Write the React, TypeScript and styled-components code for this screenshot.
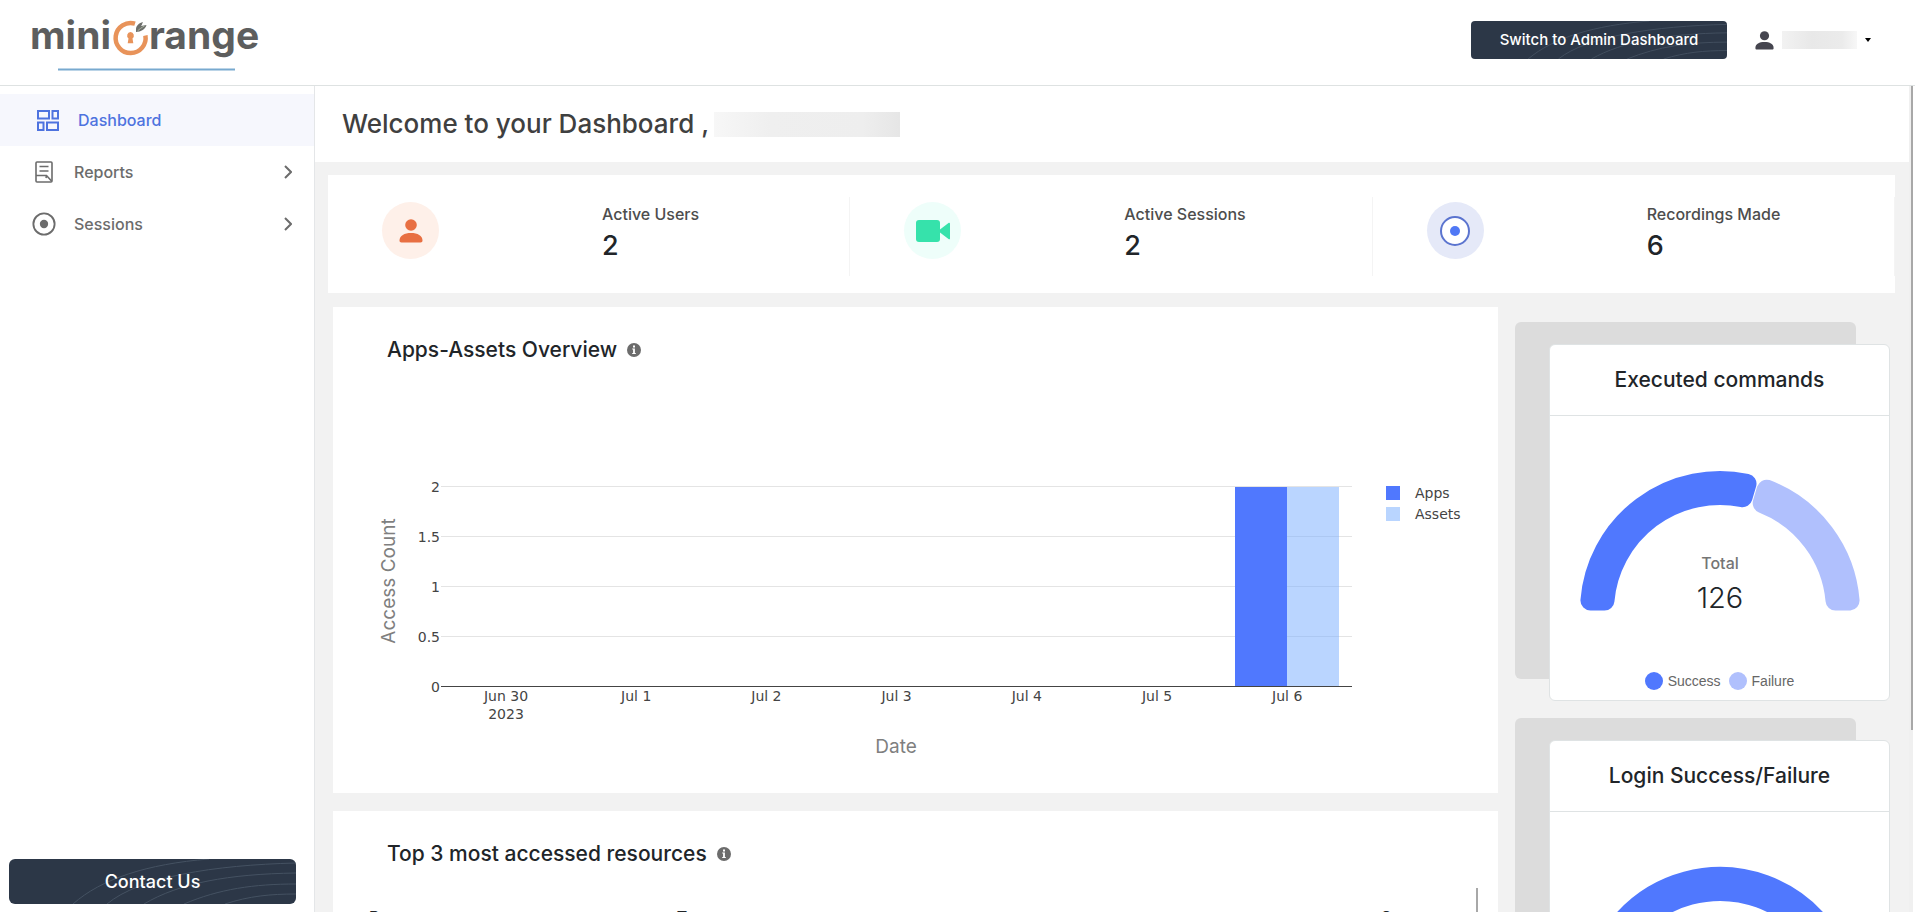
import React from "react";
import styled, { createGlobalStyle } from "styled-components";

const GlobalStyle = createGlobalStyle`
  *, *::before, *::after { box-sizing: border-box; }
  body {
    margin: 0;
    background: #ffffff;
    color: #212529;
    font-family: Inter, "Open Sans", sans-serif;
    overflow: hidden;
  }
  h1, h2, p, ul { margin: 0; padding: 0; }
  ul { list-style: none; }
  button { font-family: inherit; cursor: pointer; }
  svg { display: block; }
`;

/* ---------- shell ---------- */

const Page = styled.div`
  display: flex;
  flex-direction: column;
  height: 100vh;
`;

const Header = styled.header`
  display: flex;
  align-items: flex-start;
  justify-content: space-between;
  flex: none;
  height: 86px;
  padding: 0 44px 0 24px;
  border-bottom: 1px solid #dee2e2;
`;

const HomeLink = styled.a`
  display: block;
  padding-top: 8px;
`;

const HeaderActions = styled.div`
  display: flex;
  align-items: center;
  gap: 28px;
  padding-top: 21px;
`;

const Shell = styled.div`
  display: grid;
  grid-template-columns: 315px minmax(0, 1fr) 6px;
  flex: 1;
  min-height: 0;
`;

const ScrollTrack = styled.div`
  padding-left: 2px;
  background: linear-gradient(to right, #f0f0f0 4px, #ffffff 4px);
`;

const ScrollThumb = styled.div`
  width: 2px;
  height: 78%;
  background: #a8a8a8;
`;

/* ---------- buttons ---------- */

const DarkButton = styled.button<{ $large?: boolean }>`
  position: relative;
  overflow: hidden;
  width: ${(p) => (p.$large ? "100%" : "256px")};
  height: ${(p) => (p.$large ? "45px" : "38px")};
  padding: 0 0 1px;
  border: 0;
  border-radius: ${(p) => (p.$large ? "6px" : "4px")};
  background: #2c3747;
  color: #ffffff;
  font-size: ${(p) => (p.$large ? "18px" : "15px")};
  font-weight: 500;
`;

const Waves = styled.svg`
  position: absolute;
  inset: 0;
  width: 100%;
  height: 100%;
`;

const ButtonLabel = styled.span`
  position: relative;
`;

const ProfileButton = styled.button`
  display: flex;
  align-items: center;
  gap: 8px;
  padding: 0;
  border: 0;
  background: none;
`;

const Redacted = styled.span<{ $wide?: boolean }>`
  display: block;
  width: ${(p) => (p.$wide ? "186px" : "75px")};
  height: ${(p) => (p.$wide ? "25px" : "18px")};
  background: ${(p) =>
    p.$wide
      ? "linear-gradient(to right, #f7f7f7, #efefef 30%, #eeeeee 80%, #e6e6e6)"
      : "linear-gradient(to right, #f2f2f2, #e8e8e8 40%, #ebebeb 80%, #f7f7f7)"};
`;

/* ---------- sidebar ---------- */

const Sidebar = styled.aside`
  display: flex;
  flex-direction: column;
  justify-content: space-between;
  padding: 8px 0;
  border-right: 1px solid #e4e6e8;
`;

const NavList = styled.ul`
  display: flex;
  flex-direction: column;
`;

const NavLink = styled.a<{ $active?: boolean }>`
  display: grid;
  grid-template-columns: 24px 1fr 8px;
  align-items: center;
  gap: 18px;
  height: 52px;
  padding: 0 22px 0 ${(p) => (p.$active ? "36px" : "32px")};
  background: ${(p) => (p.$active ? "#f6f7fd" : "transparent")};
  color: ${(p) => (p.$active ? "#4e73df" : "#6c6c6c")};
  font-size: 16px;
  font-weight: 500;
  text-decoration: none;
`;

const IconSlot = styled.span`
  display: flex;
  justify-content: center;
`;

const SidebarFooter = styled.div`
  padding: 0 18px 0 9px;
`;

/* ---------- content ---------- */

const Content = styled.main`
  overflow: hidden;
  background: #f2f2f2;
`;

const Welcome = styled.div`
  display: flex;
  align-items: center;
  gap: 5px;
  height: 76px;
  padding: 0 27px;
  background: #ffffff;
`;

const WelcomeTitle = styled.h1`
  color: #3f4040;
  font-size: 26px;
  font-weight: 500;
  line-height: 40px;
`;

const Stats = styled.section`
  display: grid;
  grid-template-columns: repeat(3, 1fr);
  margin: 13px 14px 0 13px;
  padding: 22px 0 17px;
  background: #ffffff;
`;

const Stat = styled.div`
  display: grid;
  grid-template-columns: 57px 1fr;
  column-gap: 163px;
  height: 79px;
  padding: 5px 0 0 54px;
  border-right: 1px solid #f4f4f4;
`;

const StatBadge = styled.div<{ $tint: string }>`
  display: flex;
  align-items: center;
  justify-content: center;
  width: 57px;
  height: 57px;
  border-radius: 50%;
  background: ${(p) => p.$tint};
`;

const StatLabel = styled.p`
  color: #4d4d4d;
  font-size: 16px;
  font-weight: 500;
  line-height: 24px;
`;

const StatValue = styled.p`
  padding-top: 2px;
  font-size: 27px;
  font-weight: 500;
  line-height: 36px;
`;

const Columns = styled.div`
  display: grid;
  grid-template-columns: minmax(0, 1fr) 375px;
  column-gap: 17px;
  align-items: start;
  padding: 14px 19px 0 18px;
`;

const MainColumn = styled.div`
  display: flex;
  flex-direction: column;
  gap: 18px;
`;

const SideColumn = styled.div`
  display: flex;
  flex-direction: column;
  gap: 17px;
  padding-top: 15px;
`;

const Panel = styled.section`
  background: #ffffff;
`;

const PanelHead = styled.div`
  display: flex;
  align-items: center;
  gap: 10px;
  padding: 28px 54px 19px;
`;

const PanelTitle = styled.h2`
  font-size: 21px;
  font-weight: 500;
  line-height: 30px;
`;

const TableScroller = styled.div`
  display: flex;
  justify-content: space-between;
  padding: 0 20px 24px 36px;
`;

const TableThumb = styled.div`
  width: 2px;
  background: #a8a8a8;
`;

const Table = styled.table`
  width: calc(100% - 10px);
  margin-top: 11px;
  border-collapse: collapse;
  table-layout: fixed;
  font-size: 16px;

  th {
    height: 36px;
    padding: 0;
    text-align: left;
    font-weight: 500;
    color: #212529;
  }
`;

/* ---------- stacked gauge cards ---------- */

const Stack = styled.section`
  display: grid;
`;

const StackBack = styled.div`
  grid-area: 1 / 1;
  margin: 0 34px 22px 0;
  border-radius: 6px;
  background: #dcdcdc;
`;

const Card = styled.div`
  grid-area: 1 / 1;
  margin: 22px 0 0 34px;
  border: 1px solid #dfe3e4;
  border-radius: 6px;
  background: #ffffff;
`;

const CardTitle = styled.h2`
  border-bottom: 1px solid #dfe3e4;
  font-size: 21px;
  font-weight: 500;
  line-height: 70px;
  text-align: center;
`;

const Legend = styled.ul`
  display: flex;
  justify-content: center;
  gap: 8px;
  padding: 0 0 10px;
`;

const LegendItem = styled.li<{ $color: string }>`
  display: flex;
  align-items: center;
  gap: 5px;
  color: #666666;
  font-family: "Liberation Sans", Arial, sans-serif;
  font-size: 14px;
  line-height: 18px;

  &::before {
    content: "";
    width: 18px;
    height: 18px;
    border-radius: 50%;
    background: ${(p) => p.$color};
  }
`;

/* ---------- drawings ---------- */

const Logo = () => (
  <svg width="244" height="66" viewBox="24 8 244 66" role="img" aria-label="miniOrange">
    <g fill="#5d5e5e" fontFamily="Inter, sans-serif" fontSize="39" fontWeight="700">
      <text x="30" y="49">mini</text>
      <text x="149" y="49">range</text>
    </g>
    <path d="M135 23.700A15 15 0 1 0 145.400 35.500" fill="none" stroke="#e8935a" strokeWidth="4.500" />
    <path
      d="M130.500 32a3.600 3.600 0 0 1 2 6.400l.8 4.800h-5.600l.8-4.800a3.600 3.600 0 0 1 2-6.400Z"
      fill="#e8935a"
    />
    <path d="M136 29.500c0-4 3-6.500 7-7.500-1 2-1 3-2 4l5.500-1c-1 4-5.500 7-10.500 7Z" fill="#6d6f6b" />
    <path d="M137.500 31c2-2 4-3.500 7-5" fill="none" stroke="#a9b3a0" strokeWidth="1" />
    <path d="M58 69.500h177" stroke="#78a9cf" strokeWidth="2" />
  </svg>
);

const ButtonWaves = () => (
  <Waves viewBox="0 0 287 45" preserveAspectRatio="none" aria-hidden="true">
    <g fill="none" stroke="#455262" strokeWidth="1">
      <path d="M64 45C92 20 138 5 200 0" />
      <path d="M98 45C130 18 205 6 287 4" />
      <path d="M135 45C170 24 220 15 287 14" />
      <path d="M175 45C210 30 245 25 287 25" />
      <path d="M216 45C240 37 262 35 287 35" />
    </g>
  </Waves>
);

const PersonIcon = ({ size, color }: { size: number; color: string }) => (
  <svg width={size} height={size} viewBox="0 0 24 24" fill={color} aria-hidden="true">
    <circle cx="12" cy="6" r="5.800" />
    <path d="M.5 21.500c0-5 5-7.500 11.500-7.500s11.500 2.500 11.500 7.500c0 1.200-.6 2-2 2h-19c-1.400 0-2-.8-2-2Z" />
  </svg>
);

const VideoIcon = () => (
  <svg width="34" height="22" viewBox="0 0 34 22" fill="#36e2ab" aria-hidden="true">
    <rect width="24" height="22" rx="3" />
    <path d="M24 9.500 32.500 3c.8-.6 1.500-.2 1.500.6v14.800c0 .8-.7 1.200-1.500.6L24 12.500Z" />
  </svg>
);

const RecordIcon = () => (
  <svg width="30" height="30" viewBox="0 0 30 30" aria-hidden="true">
    <circle cx="15" cy="15" r="14" fill="#ffffff" stroke="#5b74cf" strokeWidth="2" />
    <circle cx="15" cy="15" r="5" fill="#5078f5" />
  </svg>
);

const DashboardIcon = () => (
  <svg width="22" height="21" viewBox="0 0 22 21" fill="none" stroke="currentColor" strokeWidth="2" aria-hidden="true">
    <rect x="1" y="1" width="11" height="7.500" />
    <rect x="15.500" y="1" width="5.500" height="7.500" />
    <rect x="1" y="12.500" width="5.500" height="7.500" />
    <rect x="10" y="12.500" width="11" height="7.500" />
  </svg>
);

const ReportIcon = () => (
  <svg width="18" height="22" viewBox="0 0 18 22" fill="none" stroke="currentColor" strokeWidth="1.600" aria-hidden="true">
    <path d="M2 1h14a1 1 0 0 1 1 1v18a1 1 0 0 1-1 1H2a1 1 0 0 1-1-1V2a1 1 0 0 1 1-1Z" />
    <path d="M4.500 5.500h9M4.500 10h9M1 14.500h10.500L16.500 20M11.500 14.500 11 17" />
  </svg>
);

const SessionIcon = () => (
  <svg width="26" height="26" viewBox="0 0 26 26" aria-hidden="true">
    <circle cx="13" cy="13" r="11.500" fill="none" stroke="currentColor" strokeWidth="2" />
    <circle cx="13" cy="13" r="4.500" fill="currentColor" />
  </svg>
);

const Chevron = () => (
  <svg width="8" height="14" viewBox="0 0 8 14" fill="none" stroke="currentColor" strokeWidth="2" aria-hidden="true">
    <path d="m1 1 6 6-6 6" />
  </svg>
);

const InfoIcon = () => (
  <svg width="14" height="14" viewBox="0 0 14 14" role="img" aria-label="More information">
    <circle cx="7" cy="7" r="7" fill="#6c6c6c" />
    <path d="M6 2.600h2v1.800H6ZM5.200 5.600h2.700v4.300h.9v1H5.200v-1h.9V6.600h-.9Z" fill="#ffffff" />
  </svg>
);

/* ---------- overview chart ---------- */

const days = ["Jun 30", "Jul 1", "Jul 2", "Jul 3", "Jul 4", "Jul 5", "Jul 6"];
const ticks = ["0", "0.5", "1", "1.5", "2"];
const baseY = 302;
const tickStep = 50;

const OverviewChart = () => (
  <svg width="100%" viewBox="0 0 1165 409" role="img" aria-label="Access count of apps and assets by date">
    {ticks.slice(1).map((t, i) => (
      <rect key={t} x="108" y={baseY - (i + 1) * tickStep} width="911" height="1" fill="#e4e4e4" />
    ))}
    <rect x="902" y="103" width="52" height="200" fill="#5078fe" />
    <rect x="954" y="103" width="52" height="200" fill="#75acff" fillOpacity="0.500" />
    <rect x="108" y={baseY} width="911" height="1" fill="#444444" />
    <g fill="#444444" fontFamily="'DejaVu Sans', Verdana, sans-serif" fontSize="14">
      {ticks.map((t, i) => (
        <text key={t} x="107" y={baseY + 6 - i * tickStep} textAnchor="end">{t}</text>
      ))}
      {days.map((d, i) => (
        <text key={d} x={173 + i * 130.2} y="317" textAnchor="middle">{d}</text>
      ))}
      <text x="173" y="335" textAnchor="middle">2023</text>
      <rect x="1053" y="102" width="14" height="14" fill="#5078fe" />
      <rect x="1053" y="123" width="14" height="14" fill="#b9d5ff" />
      <text x="1082" y="114">Apps</text>
      <text x="1082" y="135">Assets</text>
    </g>
    <g fill="#7f7f7f" fontFamily="Inter, sans-serif" fontSize="19" textAnchor="middle">
      <text x="563" y="369">Date</text>
      <text transform="translate(62 197) rotate(-90)">Access Count</text>
    </g>
  </svg>
);

/* ---------- half-ring gauge ---------- */

const cx = 170;
const cy = 195;

// Each segment is inset by the corner radius and stroked by twice that
// amount with round joins, which rounds all four of its corners.
const segment = (from: number, to: number) => {
  const corner = 10;
  const outer = 140 - corner;
  const inner = 106 + corner;
  const at = (r: number, deg: number, sign: number) => {
    const a = (deg * Math.PI) / 180 + sign * Math.asin((corner + 0.5) / r);
    return `${cx - r * Math.cos(a)} ${cy - r * Math.sin(a)}`;
  };
  return `M${at(outer, from, 1)}A${outer} ${outer} 0 0 1 ${at(outer, to, -1)}L${at(inner, to, -1)}A${inner} ${inner} 0 0 0 ${at(inner, from, 1)}Z`;
};

const Gauge = ({ split, total }: { split: number; total: string }) => (
  <svg width="100%" viewBox="0 0 339 256" role="img" aria-label={`Total ${total}`}>
    <g strokeWidth="20" strokeLinejoin="round">
      <path d={segment(0, split)} fill="#5078fe" stroke="#5078fe" />
      <path d={segment(split, 180)} fill="#b0c0fd" stroke="#b0c0fd" />
    </g>
    <g fontFamily="Inter, sans-serif" textAnchor="middle">
      <text x={cx} y="153" fontSize="16" fontWeight="500" fill="#757575">Total</text>
      <text x={cx} y="192" fontSize="29" fontWeight="300" fill="#212529">{total}</text>
    </g>
  </svg>
);

const GaugeCard = ({ title, split, total }: { title: string; split: number; total: string }) => (
  <Stack>
    <StackBack />
    <Card>
      <CardTitle>{title}</CardTitle>
      <Gauge split={split} total={total} />
      <Legend>
        <LegendItem $color="#5078fe">Success</LegendItem>
        <LegendItem $color="#b0c0fd">Failure</LegendItem>
      </Legend>
    </Card>
  </Stack>
);

const stats = [
  { label: "Active Users", value: 2, tint: "#fef0e9", icon: <PersonIcon size={24} color="#e86f42" /> },
  { label: "Active Sessions", value: 2, tint: "#eefefa", icon: <VideoIcon /> },
  { label: "Recordings Made", value: 6, tint: "#e5e9f8", icon: <RecordIcon /> },
];

export default function App() {
  return (
    <Page>
      <GlobalStyle />
      <Header>
        <HomeLink href="#home"><Logo /></HomeLink>
        <HeaderActions>
          <DarkButton type="button">
            <ButtonWaves />
            <ButtonLabel>Switch to Admin Dashboard</ButtonLabel>
          </DarkButton>
          <ProfileButton type="button" aria-label="Account menu">
            <PersonIcon size={19} color="#45454f" />
            <Redacted />
            <svg width="6" height="4" viewBox="0 0 6 4" aria-hidden="true">
              <path d="M0 0h6L3 4Z" fill="#000000" />
            </svg>
          </ProfileButton>
        </HeaderActions>
      </Header>

      <Shell>
        <Sidebar>
          <nav>
            <NavList>
              <li>
                <NavLink href="#dashboard" $active aria-current="page">
                  <IconSlot><DashboardIcon /></IconSlot>Dashboard
                </NavLink>
              </li>
              <li>
                <NavLink href="#reports">
                  <IconSlot><ReportIcon /></IconSlot>Reports<Chevron />
                </NavLink>
              </li>
              <li>
                <NavLink href="#sessions">
                  <IconSlot><SessionIcon /></IconSlot>Sessions<Chevron />
                </NavLink>
              </li>
            </NavList>
          </nav>
          <SidebarFooter>
            <DarkButton type="button" $large>
              <ButtonWaves />
              <ButtonLabel>Contact Us</ButtonLabel>
            </DarkButton>
          </SidebarFooter>
        </Sidebar>

        <Content>
          <Welcome>
            <WelcomeTitle>Welcome to your Dashboard ,</WelcomeTitle>
            <Redacted $wide />
          </Welcome>

          <Stats>
            {stats.map((s) => (
              <Stat key={s.label}>
                <StatBadge $tint={s.tint}>{s.icon}</StatBadge>
                <div>
                  <StatLabel>{s.label}</StatLabel>
                  <StatValue>{s.value}</StatValue>
                </div>
              </Stat>
            ))}
          </Stats>

          <Columns>
            <MainColumn>
              <Panel>
                <PanelHead>
                  <PanelTitle>Apps-Assets Overview</PanelTitle>
                  <InfoIcon />
                </PanelHead>
                <OverviewChart />
              </Panel>
              <Panel>
                <PanelHead>
                  <PanelTitle>Top 3 most accessed resources</PanelTitle>
                  <InfoIcon />
                </PanelHead>
                <TableScroller>
                  <Table>
                    <colgroup>
                      <col width="28%" />
                      <col width="64%" />
                      <col />
                    </colgroup>
                    <thead>
                      <tr>
                        <th scope="col">Resource</th>
                        <th scope="col">Type</th>
                        <th scope="col">Count</th>
                      </tr>
                    </thead>
                  </Table>
                  <TableThumb />
                </TableScroller>
              </Panel>
            </MainColumn>

            <SideColumn>
              <GaugeCard title="Executed commands" split={106.400} total="126" />
              <GaugeCard title="Login Success/Failure" split={150} total="126" />
            </SideColumn>
          </Columns>
        </Content>

        <ScrollTrack><ScrollThumb /></ScrollTrack>
      </Shell>
    </Page>
  );
}
